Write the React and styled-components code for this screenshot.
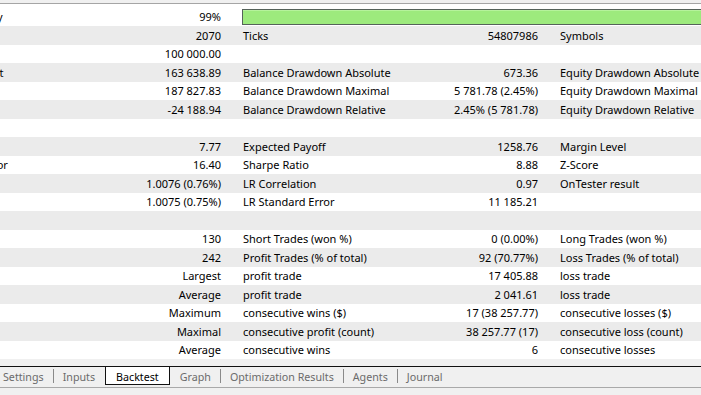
import React from "react";
import styled, { createGlobalStyle } from "styled-components";

const GlobalStyle = createGlobalStyle`
  html, body {
    margin: 0;
    padding: 0;
    background: #ffffff;
  }
  body {
    font-family: "Noto Sans", "Open Sans", sans-serif;
    font-size: 11px;
    color: #000000;
  }
`;

const Window = styled.div`
  width: 701px;
  height: 395px;
  overflow: hidden;
  display: flex;
  flex-direction: column;
  background: #ffffff;
`;

const TopEdge = styled.div`
  height: 3px;
  background: #f0f0f0;
  border-bottom: 1px solid #a5a5a5;
  margin-bottom: 3.5px;
`;

const Table = styled.div`
  margin-left: -75px;
  display: flex;
  flex-direction: column;
`;

const Row = styled.div`
  display: grid;
  grid-template-columns: 175px 142px 175px 142px 175px 142px;
  height: 18.5px;
  align-items: center;
  background: #ffffff;
  white-space: nowrap;

  &:nth-child(even) {
    background: #ebebeb;
  }
`;

const Label = styled.div`
  padding-left: 1px;
  overflow: hidden;
`;

const Value = styled.div`
  text-align: right;
  padding-right: 21px;
`;

const Progress = styled.div`
  grid-column: 3 / 7;
  height: 14px;
  border: 1px solid #55625a;
  background: #9dea7d;
  box-shadow: inset 0 1px 0 #b6f29c;
`;

const TabArea = styled.div`
  flex: 1;
  background: #f0f0f0;
  padding-top: 7px;
  display: flex;
  flex-direction: column;
`;

const TabStrip = styled.div`
  display: flex;
  align-items: flex-start;
  height: 18px;
  margin-left: -6px;
  border-top: 1px solid #111111;
  font-size: 10.7px;
`;

const Tab = styled.div`
  height: 14px;
  line-height: 14px;
  padding: 3px ${(p) => (p.$active ? "10px" : "8px")} 0;
  color: ${(p) => (p.$active ? "#000000" : "#6b6b6b")};
  background: ${(p) => (p.$active ? "#ffffff" : "transparent")};
  border: 1px solid ${(p) => (p.$active ? "#111111" : "transparent")};
  border-top: none;
`;

const Separator = styled.div`
  width: 1px;
  height: 14px;
  margin-top: 2px;
  background: ${(p) => (p.$hidden ? "transparent" : "#8a8a8a")};
`;

const BottomLine = styled.div`
  margin-top: 2px;
  border-top: 1px solid #a9a9a9;
`;

const rows = [
  ["History Quality", "99%", "bar"],
  ["Bars", "2070", "Ticks", "54807986", "Symbols", "1"],
  ["Initial Deposit", "100 000.00", "", "", "", ""],
  ["Total Net Profit", "163 638.89", "Balance Drawdown Absolute", "673.36", "Equity Drawdown Absolute", ""],
  ["Gross Profit", "187 827.83", "Balance Drawdown Maximal", "5 781.78 (2.45%)", "Equity Drawdown Maximal", ""],
  ["Gross Loss", "-24 188.94", "Balance Drawdown Relative", "2.45% (5 781.78)", "Equity Drawdown Relative", ""],
  ["", "", "", "", "", ""],
  ["Profit Factor", "7.77", "Expected Payoff", "1258.76", "Margin Level", ""],
  ["Recovery Factor", "16.40", "Sharpe Ratio", "8.88", "Z-Score", ""],
  ["AHPR", "1.0076 (0.76%)", "LR Correlation", "0.97", "OnTester result", ""],
  ["GHPR", "1.0075 (0.75%)", "LR Standard Error", "11 185.21", "", ""],
  ["", "", "", "", "", ""],
  ["Total Trades", "130", "Short Trades (won %)", "0 (0.00%)", "Long Trades (won %)", ""],
  ["Total Deals", "242", "Profit Trades (% of total)", "92 (70.77%)", "Loss Trades (% of total)", ""],
  ["", "Largest", "profit trade", "17 405.88", "loss trade", ""],
  ["", "Average", "profit trade", "2 041.61", "loss trade", ""],
  ["", "Maximum", "consecutive wins ($)", "17 (38 257.77)", "consecutive losses ($)", ""],
  ["", "Maximal", "consecutive profit (count)", "38 257.77 (17)", "consecutive loss (count)", ""],
  ["", "Average", "consecutive wins", "6", "consecutive losses", ""],
];

const tabs = ["Settings", "Inputs", "Backtest", "Graph", "Optimization Results", "Agents", "Journal"];
const activeTab = "Backtest";

function StatRow({ cells }) {
  if (cells[2] === "bar") {
    return (
      <Row>
        <Label>{cells[0]}</Label>
        <Value>{cells[1]}</Value>
        <Progress />
      </Row>
    );
  }
  return (
    <Row>
      {cells.map((c, i) =>
        i % 2 === 0 ? <Label key={i}>{c}</Label> : <Value key={i}>{c}</Value>
      )}
    </Row>
  );
}

export default function App() {
  const activeIndex = tabs.indexOf(activeTab);
  return (
    <>
      <GlobalStyle />
      <Window>
        <TopEdge />
        <Table>
          {rows.map((r, i) => (
            <StatRow key={i} cells={r} />
          ))}
        </Table>
        <TabArea>
          <TabStrip>
            {tabs.map((t, i) => (
              <React.Fragment key={t}>
                {i > 0 && (
                  <Separator $hidden={i === activeIndex || i - 1 === activeIndex} />
                )}
                <Tab $active={t === activeTab}>{t}</Tab>
              </React.Fragment>
            ))}
          </TabStrip>
          <BottomLine />
        </TabArea>
      </Window>
    </>
  );
}
